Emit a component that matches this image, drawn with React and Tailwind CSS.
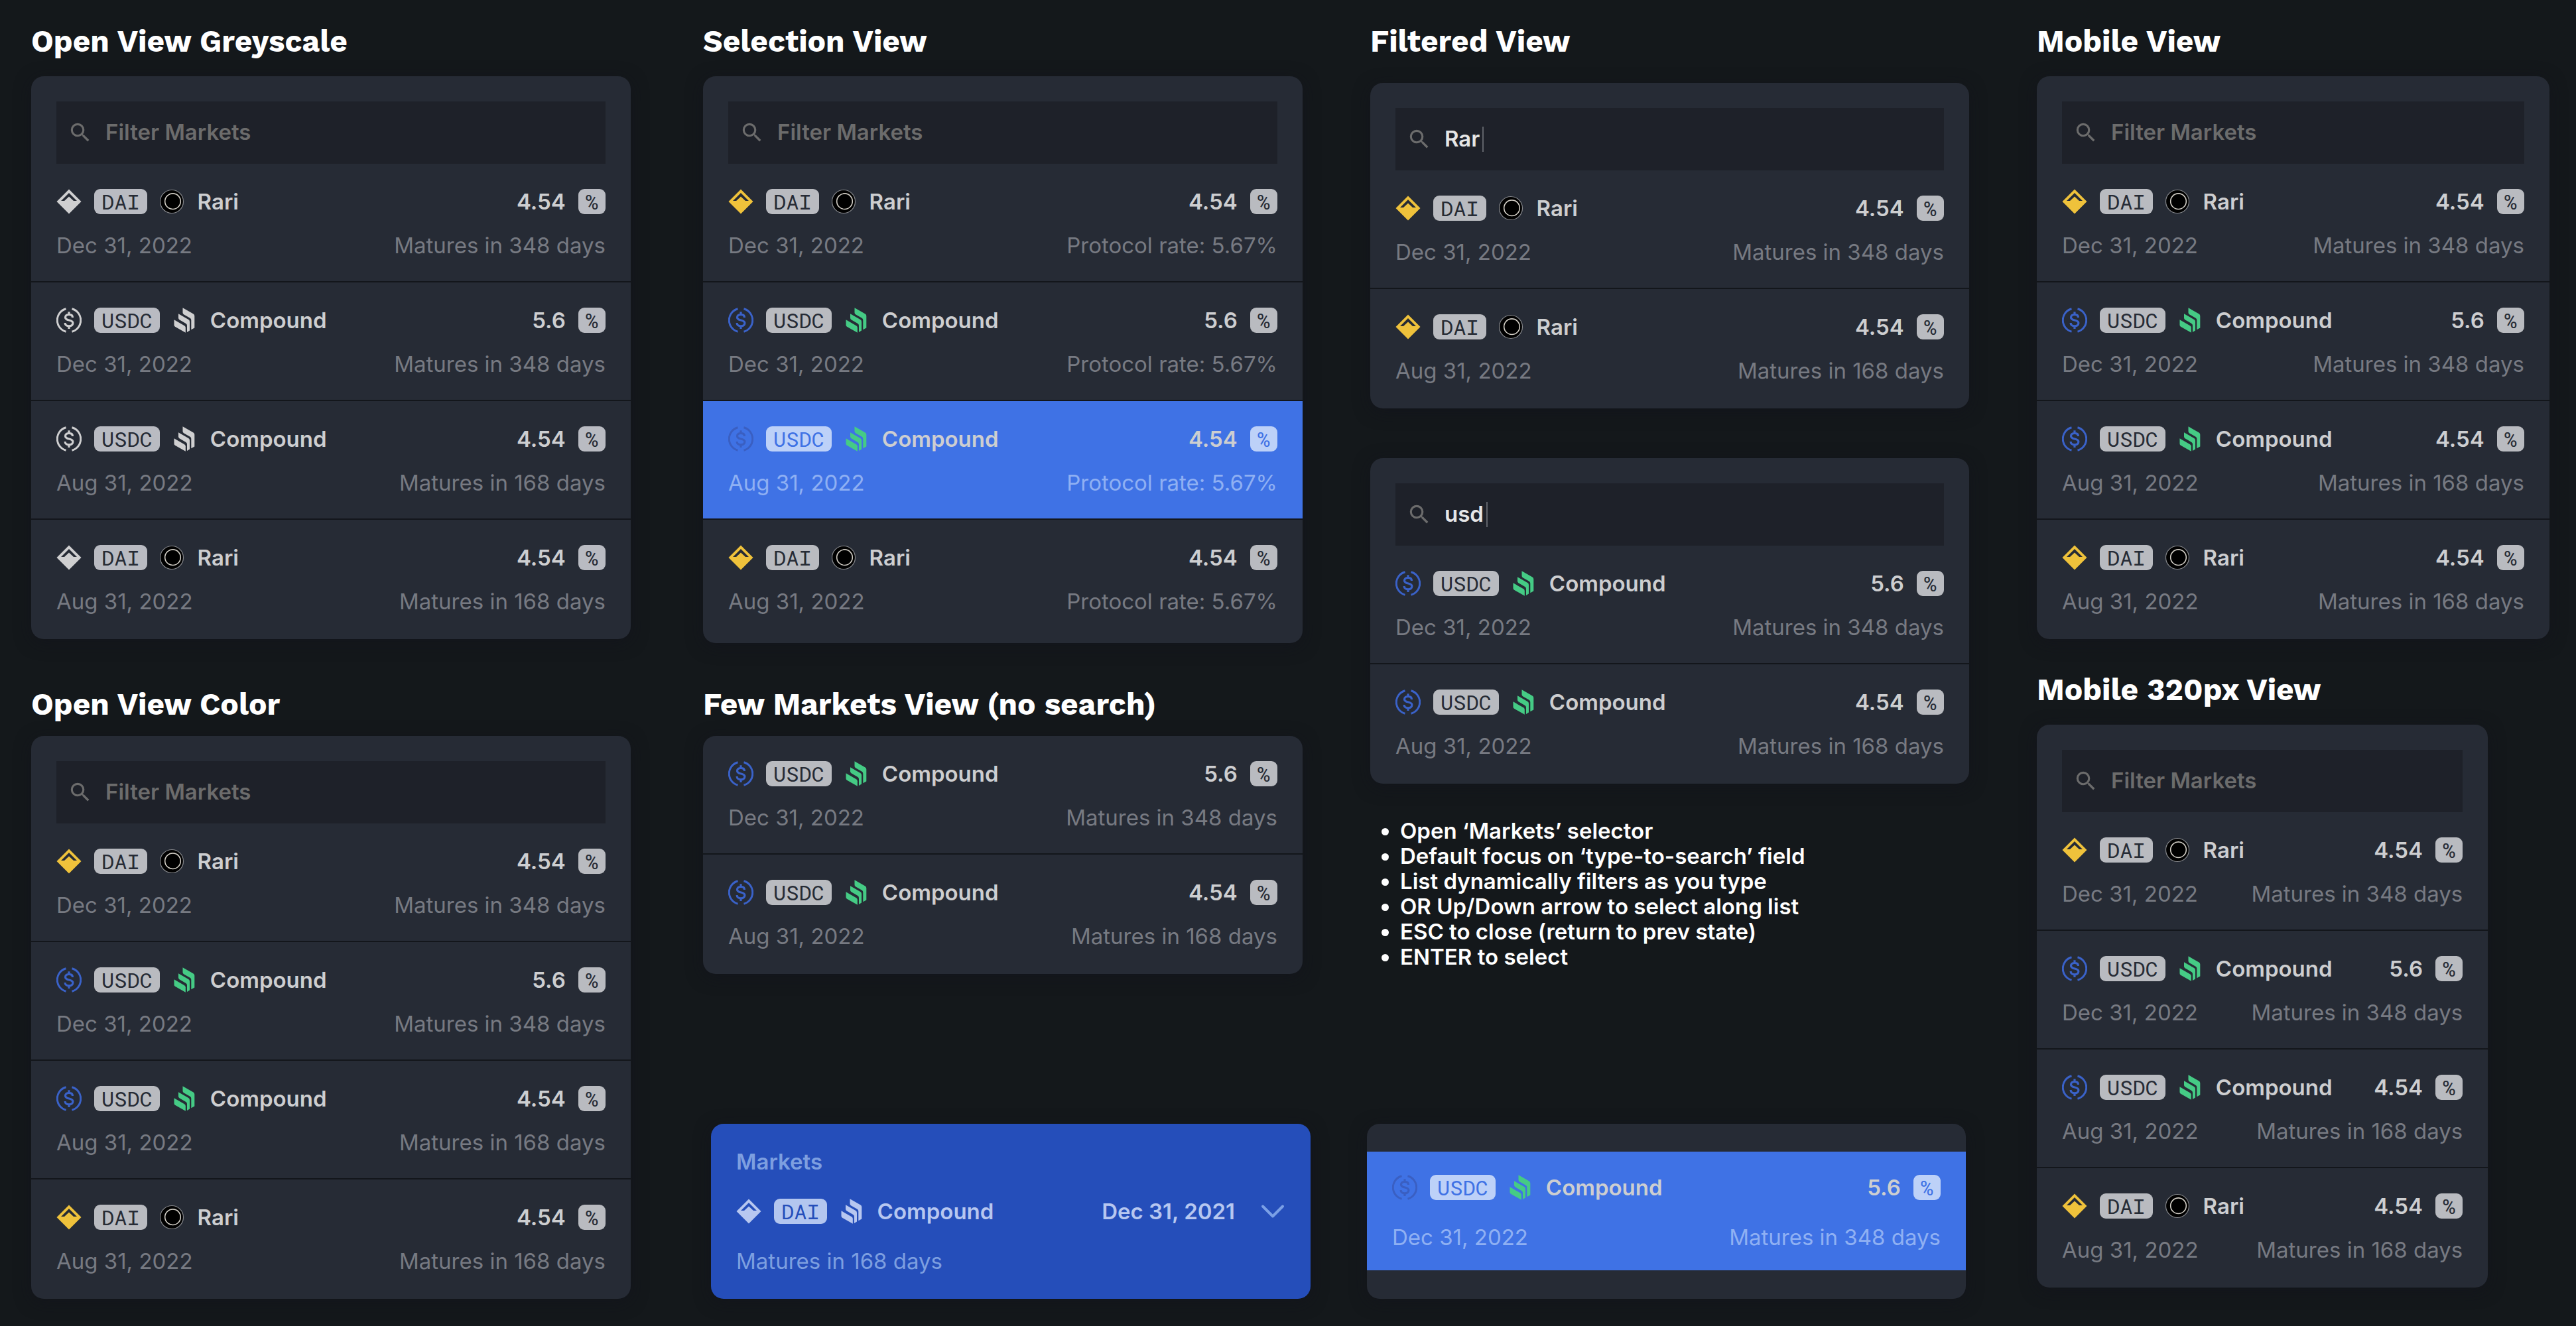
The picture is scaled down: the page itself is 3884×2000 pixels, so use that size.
const FONT_UI = "font-['Inter',sans-serif]";
const FONT_MONO = "font-['Roboto_Mono','DejaVu_Sans_Mono',monospace]";

function DaiIcon({ className }) {
  return (
    <svg viewBox="0 0 38 38" className={`size-[38px] shrink-0 ${className}`} aria-hidden="true">
      <path
        fill="currentColor"
        fillRule="evenodd"
        d="M19 .5 37.500 19 19 37.500 .5 19ZM19 6 7 18h5l7-6.500 7 6.500h5Z"
      />
    </svg>
  );
}

function UsdcIcon({ className }) {
  return (
    <svg
      viewBox="0 0 38 38"
      className={`size-[38px] shrink-0 ${className}`}
      fill="none"
      stroke="currentColor"
      strokeWidth="3"
      aria-hidden="true"
    >
      <path d="M14.500 1.800a17.800 17.800 0 0 0 0 34.400M23.500 1.800a17.800 17.800 0 0 1 0 34.400" />
      <path
        strokeWidth="3.200"
        d="M24.500 15c0-3-2.300-4.600-5.500-4.600-3.300 0-5.500 1.700-5.500 4.300 0 6 11.400 2.700 11.400 8.600 0 2.800-2.500 4.600-5.900 4.600-3.500 0-5.900-1.900-5.900-4.900M19 6.200v4M19 27.900v4"
      />
    </svg>
  );
}

function CompoundIcon({ className }) {
  return (
    <svg viewBox="0 0 38 38" className={`size-[38px] shrink-0 ${className}`} fill="currentColor" aria-hidden="true">
      <path d="M2.500 18.300 18 27.200Q19.800 28.300 19.800 30.300V37.800L4 28.800Q2.500 27.900 2.500 26Z" />
      <path d="M9 9.300 24.200 18Q26 19.100 26 21.200V34.500L22 36.900V27Q22 25 20.300 24L10.500 18.300Q9 17.400 9 15.600Z" />
      <path d="M15.500 .2 31.600 9.400Q33.300 10.500 33.300 12.600V30.500L28.300 33.300V18.800Q28.300 16.800 26.600 15.800L17 10.200Q15.500 9.300 15.500 7.500Z" />
    </svg>
  );
}

function RariIcon() {
  return (
    <svg viewBox="0 0 38 38" className="size-[38px] shrink-0" aria-hidden="true">
      <circle cx="18" cy="19" r="17.500" fill="#000" stroke="#85878b" strokeWidth="1.200" />
      <circle cx="19.500" cy="18.700" r="11.800" fill="#000" stroke="#d2cec6" strokeWidth="1.600" />
    </svg>
  );
}

function SearchIcon() {
  return (
    <svg viewBox="0 0 24 24" className="size-[38px] shrink-0 text-[#6c6c6c]" fill="currentColor" aria-hidden="true">
      <path d="M15.500 14h-.790l-.280-.270A6.471 6.471 0 0 0 16 9.500 6.500 6.500 0 1 0 9.500 16c1.610 0 3.090-.590 4.230-1.570l.270.280v.790l5 4.990L20.490 19l-4.990-5zm-6 0C7.010 14 5 11.990 5 9.500S7.010 5 9.500 5 14 7.010 14 9.500 11.990 14 9.500 14z" />
    </svg>
  );
}

const ICON_TONES = {
  grey: { DAI: 'text-[#cfcfd0]', USDC: 'text-[#cfcfd0]', Compound: 'text-[#cfcfd0]' },
  color: { DAI: 'text-[#efc23b]', USDC: 'text-[#3a62c9]', Compound: 'text-[#45cb85]' },
  selected: { DAI: 'text-[#efc23b]', USDC: 'text-[#3a5fc2]', Compound: 'text-[#45cb85]' },
  header: { DAI: 'text-[#b7c7f0]', USDC: 'text-[#b7c7f0]', Compound: 'text-[#b7c7f0]' },
};

const BADGE_TONES = {
  grey: 'bg-[#b9bbc2] text-[#262b35]',
  color: 'bg-[#b9bbc0] text-[#262b35]',
  selected: 'bg-[#bdd1f8] text-[#3f72e5]',
  header: 'bg-[#b3c6ef] text-[#254eba]',
};

function Badge({ tone, children }) {
  return (
    <span
      className={`flex h-[38px] items-center rounded-[9px] px-[11px] text-[32px] leading-[38px] font-normal ${FONT_MONO} ${BADGE_TONES[tone]}`}
    >
      {children}
    </span>
  );
}

function Market({ token, protocol, tone }) {
  const tones = ICON_TONES[tone];
  return (
    <span className="flex items-center gap-[19px]">
      {token === 'DAI' ? <DaiIcon className={tones.DAI} /> : <UsdcIcon className={tones.USDC} />}
      <Badge tone={tone}>{token}</Badge>
      {protocol === 'Rari' ? <RariIcon /> : <CompoundIcon className={tones.Compound} />}
      <span>{protocol}</span>
    </span>
  );
}

function Row({ token, protocol, date, rate, note, tone, selected, roomy }) {
  const shade = selected ? 'selected' : tone;
  return (
    <button
      type="button"
      aria-pressed={Boolean(selected)}
      className={`flex w-full flex-col px-[38px] text-left ${roomy ? 'gap-[37px] pt-[35px] pb-[31px]' : 'gap-7 pt-[38px] pb-[35px]'} ${selected ? 'bg-[#3f72e5]' : ''}`}
    >
      <span className="flex h-[38px] w-full items-center justify-between text-[33px] leading-[38px] font-semibold text-[#cdced0]">
        <Market token={token} protocol={protocol} tone={shade} />
        <span className="flex items-center gap-[19px]">
          {rate}
          <Badge tone={shade}>%</Badge>
        </span>
      </span>
      <span
        className={`flex w-full items-center justify-between text-[33px] leading-[38px] ${selected ? 'text-[#8fb0f3]' : 'text-[#777a82]'}`}
      >
        <span>{date}</span>
        <span>{note}</span>
      </span>
    </button>
  );
}

function Search({ query }) {
  return (
    <div className="mx-[38px] flex h-[94px] items-center gap-[19px] bg-[#1e2129] px-[17px]">
      <SearchIcon />
      {query ? (
        <span className="flex items-center gap-1">
          <input
            type="text"
            aria-label="Filter Markets"
            defaultValue={query}
            className="field-sizing-content h-11 bg-transparent text-[33px] font-semibold text-[#e6e6e6] outline-none"
          />
          <span className="h-[38px] w-[2px] bg-[#606369]" />
        </span>
      ) : (
        <input
          type="text"
          aria-label="Filter Markets"
          placeholder="Filter Markets"
          className="h-11 min-w-0 flex-1 bg-transparent text-[33px] font-semibold outline-none placeholder:text-[#6c6c6c] placeholder:opacity-100"
        />
      )}
    </div>
  );
}

function Panel({ rows, tone = 'color', search, query, className = 'pb-[3px]' }) {
  return (
    <div className={`overflow-hidden rounded-[19px] bg-[#262b35] shadow-[0_5px_24px_rgba(17,17,28,0.5)] ${className}`}>
      {search && (
        <div className="pt-[38px]">
          <Search query={query} />
        </div>
      )}
      <ul className="divide-y-2 divide-[#13161b]">
        {rows.map((row, i) => (
          <li key={i}>
            <Row tone={tone} {...row} />
          </li>
        ))}
      </ul>
    </div>
  );
}

function Title({ className = '', children }) {
  return (
    <h2
      className={`font-['Work_Sans','Inter',sans-serif] text-[46px] leading-[56px] font-bold whitespace-nowrap text-white ${className}`}
    >
      {children}
    </h2>
  );
}

function MarketSelect() {
  return (
    <button
      type="button"
      aria-haspopup="listbox"
      className="flex w-full flex-col gap-[37px] rounded-[19px] bg-[#254eba] p-[38px] text-left text-[33px] leading-[38px] text-[#7d9fe0] shadow-[0_5px_24px_rgba(17,17,28,0.5)]"
    >
      <span className="font-semibold">Markets</span>
      <span className="flex h-[38px] w-full items-center justify-between font-semibold text-[#b7c7f0]">
        <Market token="DAI" protocol="Compound" tone="header" />
        <span className="flex items-center gap-[38px]">
          Dec 31, 2021
          <svg
            viewBox="0 0 38 38"
            className="size-[38px] text-[#7ba0e6]"
            fill="none"
            stroke="currentColor"
            strokeWidth="4"
            strokeLinecap="round"
            strokeLinejoin="round"
            aria-hidden="true"
          >
            <path d="M4 11.500 19 26.500 34 11.500" />
          </svg>
        </span>
      </span>
      <span>Matures in 168 days</span>
    </button>
  );
}

const IN_348 = 'Matures in 348 days';
const IN_168 = 'Matures in 168 days';
const PROTOCOL_RATE = 'Protocol rate: 5.67%';

const daiDec = { token: 'DAI', protocol: 'Rari', date: 'Dec 31, 2022', rate: '4.54', note: IN_348 };
const usdcDec = { token: 'USDC', protocol: 'Compound', date: 'Dec 31, 2022', rate: '5.6', note: IN_348 };
const usdcAug = { token: 'USDC', protocol: 'Compound', date: 'Aug 31, 2022', rate: '4.54', note: IN_168 };
const daiAug = { token: 'DAI', protocol: 'Rari', date: 'Aug 31, 2022', rate: '4.54', note: IN_168 };

const ALL = [daiDec, usdcDec, usdcAug, daiAug];
const SELECTION = ALL.map((row) => ({ ...row, note: PROTOCOL_RATE, selected: row === usdcAug }));

const NOTES = [
  'Open ‘Markets’ selector',
  'Default focus on ‘type-to-search’ field',
  'List dynamically filters as you type',
  'OR Up/Down arrow to select along list',
  'ESC to close (return to prev state)',
  'ENTER to select',
];

export default function App() {
  return (
    <main
      className={`grid min-h-screen grid-cols-1 content-start gap-x-[102px] bg-[#14181b] pt-[34px] pr-10 pb-8 pl-[47px] xl:grid-cols-[911fr_904fr_903fr_773fr] ${FONT_UI}`}
    >
      <section className="flex min-w-0 flex-col pr-[7px]">
        <Title className="mb-[25px]">Open View Greyscale</Title>
        <Panel search tone="grey" rows={ALL} />
        <Title className="mt-[70px] mb-5">Open View Color</Title>
        <Panel search rows={ALL} />
      </section>

      <section className="flex min-w-0 flex-col">
        <Title className="mb-[25px]">Selection View</Title>
        <Panel search rows={SELECTION} className="pb-[9px]" />
        <Title className="mt-16 mb-5">Few Markets View (no search)</Title>
        <Panel rows={[usdcDec, usdcAug]} />
        <div className="mt-[226px] -mr-3 ml-3">
          <MarketSelect />
        </div>
      </section>

      <section className="flex min-w-0 flex-col">
        <Title className="mb-[35px]">Filtered View</Title>
        <Panel search query="Rar" rows={[daiDec, daiAug]} />
        <div className="mt-[75px]">
          <Panel search query="usd" rows={[usdcDec, usdcAug]} />
        </div>
        <ul className="mt-[52px] list-disc pl-[45px] text-[33px] leading-[38px] font-semibold text-white">
          {NOTES.map((note) => (
            <li key={note}>{note}</li>
          ))}
        </ul>
        <div className="mt-[233px] mr-[5px] -ml-[5px]">
          <Panel rows={[{ ...usdcDec, selected: true, roomy: true }]} className="pt-[42px] pb-[43px]" />
        </div>
      </section>

      <section className="flex min-w-0 flex-col">
        <Title className="mb-[25px]">Mobile View</Title>
        <Panel search rows={ALL} />
        <Title className="mt-12 mb-[25px]">Mobile 320px View</Title>
        <div className="w-[88%]">
          <Panel search rows={ALL} />
        </div>
      </section>
    </main>
  );
}
